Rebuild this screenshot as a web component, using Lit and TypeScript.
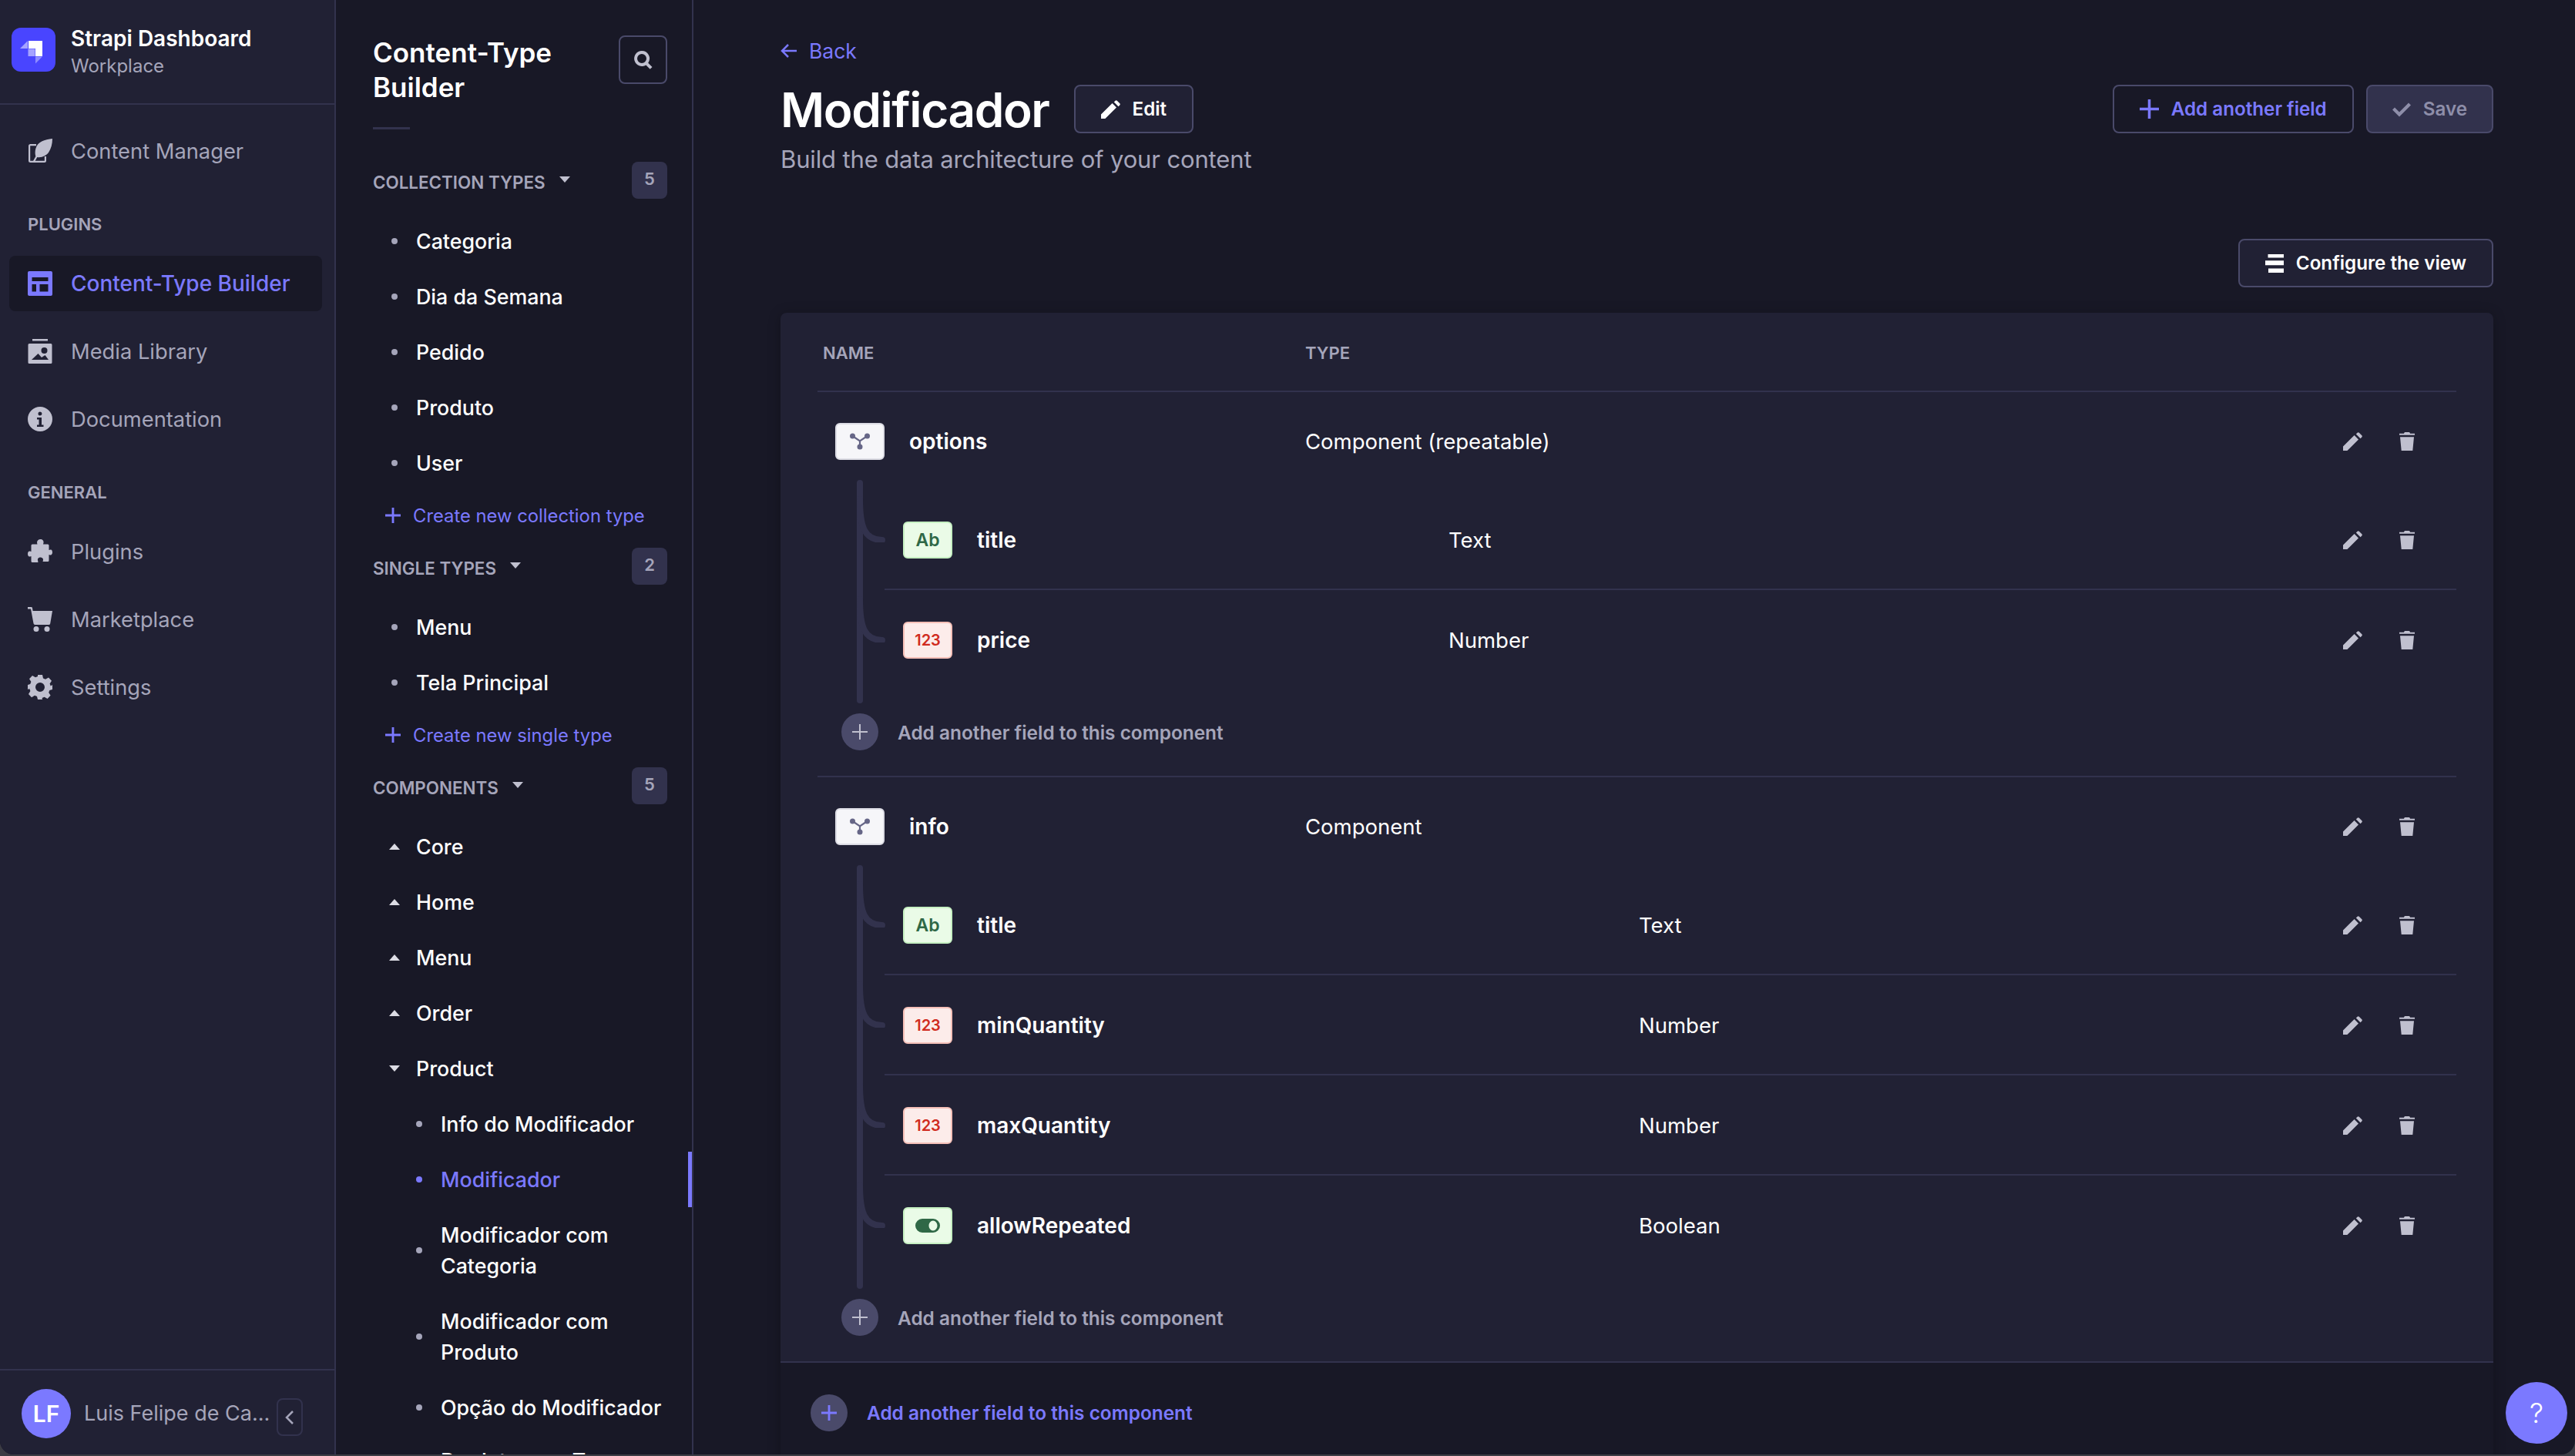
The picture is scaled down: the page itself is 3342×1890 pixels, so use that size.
import { LitElement, html, css, svg } from "lit";
import { customElement } from "lit/decorators.js";

const pencil = html`<svg class="i-pencil" viewBox="0 0 25 24"><path d="M0 24v-5.4L14.6 4l5.4 5.4L5.4 24zM16.8 2.6l1.8-1.9a1.6 1.6 0 0 1 2.2 0l3.5 3.5a1.6 1.6 0 0 1 0 2.200l-1.800 1.800z"/></svg>`;
const trash = html`<svg class="i-trash" viewBox="0 0 20 24"><path d="M6 1.700C6 .6 7 0 8 0h4c1 0 2 .6 2 1.700zM0 1.700h20v2H0zM1 6.300h18L17.300 24H2.700z"/></svg>`;
const plus = html`<svg class="i-plus" viewBox="0 0 24 24"><path d="M10.300 0h3.400v10.300H24v3.400H13.700V24h-3.400V13.700H0v-3.400h10.300z"/></svg>`;
const thinPlus = html`<svg class="i-plus" viewBox="0 0 24 24"><path d="M10.800 0h2.400v10.800H24v2.400H13.200V24h-2.400V13.200H0v-2.400h10.800z"/></svg>`;

type Field = { name: string; type: string; kind: "text" | "num" | "bool" };
type Group = { name: string; type: string; nameCol: number; fields: Field[] };

const groups: Group[] = [
  {
    name: "options",
    type: "Component (repeatable)",
    nameCol: 732,
    fields: [
      { name: "title", type: "Text", kind: "text" },
      { name: "price", type: "Number", kind: "num" },
    ],
  },
  {
    name: "info",
    type: "Component",
    nameCol: 979,
    fields: [
      { name: "title", type: "Text", kind: "text" },
      { name: "minQuantity", type: "Number", kind: "num" },
      { name: "maxQuantity", type: "Number", kind: "num" },
      { name: "allowRepeated", type: "Boolean", kind: "bool" },
    ],
  },
];

const navIcons: Record<string, unknown> = {
  write: svg`<path d="M11 7H3.500A2.500 2.500 0 0 0 1 9.500v19A2.500 2.500 0 0 0 3.500 31h18a2.500 2.500 0 0 0 2.500-2.500V23h-2.200v5.800H3.200V9.200H11z"/><path d="M32 0C22 1 12.500 4 10.300 13c-1 4-.8 7 0 10L7 29l2 1 3.300-6c6 1 12-2 15-6.500C30.200 13 32 7 32 0z"/>`,
  layout: svg`<path fill-rule="evenodd" d="M2 0h28a2 2 0 0 1 2 2v28a2 2 0 0 1-2 2H2a2 2 0 0 1-2-2V2a2 2 0 0 1 2-2zm3.500 8v5h21V8zm0 9v9.500h5.500V17zm10 0v9.500h11V17z"/>`,
  media: svg`<path fill-rule="evenodd" d="M6 0h20v2.400H6zM2 6h28a1.500 1.500 0 0 1 1.500 1.500v23A1.500 1.500 0 0 1 30 32H2A1.500 1.500 0 0 1 .500 30.500v-23A1.500 1.500 0 0 1 2 6zm19.500 5a4 4 0 1 0 0 8 4 4 0 0 0 0-8zM5 27h22l-4.500-6-4.500 3-4.500-5z"/>`,
  info: svg`<path fill-rule="evenodd" d="M16 0a16 16 0 1 1 0 32 16 16 0 0 1 0-32zm0 6.500a2.500 2.500 0 1 0 0 5 2.500 2.500 0 0 0 0-5zM12 14v2.500h2.500v7H12V26h8.500v-2.500H18V14z"/>`,
  puzzle: svg`<path d="M12 4.500C12 1.500 14 0 16.500 0S21 1.800 20.500 4.500L20 6.500h6a1.500 1.500 0 0 1 1.500 1.500v6l2-.5c2-.3 2.500 2 2.500 3.500s-1 4-3 3.500l-1.500-.5v7.500a1.500 1.500 0 0 1-1.500 1.500h-6.500l.5-2c.4-2-1.500-3.500-3.500-3.500S12.500 25 13 27l.5 3H6a1.500 1.500 0 0 1-1.500-1.500V22l-1.500.5C1 23 0 21 0 19s1-4 3-3.500l1.500.5V8A1.500 1.500 0 0 1 6 6.500h6.500z"/>`,
  cart: svg`<path d="M0 0h4.500a1.500 1.500 0 0 1 1.500 1.200L6.600 5H32l-2.800 16.500a2 2 0 0 1-2 1.500H9.500a2 2 0 0 1-2-1.700L4 2.500H0z"/><circle cx="11" cy="28.500" r="3.500"/><circle cx="25" cy="28.500" r="3.500"/>`,
  gear: svg`<path fill-rule="evenodd" d="M13 0h6l1 4.500 3 1.300 4-2.400 4 4.300-2.400 3.800 1.200 3L32 13v6l-3.600 1-1.200 3 2.400 3.800-4 4.300-4-2.400-3 1.300L19 32h-6l-1-3.900-3-1.300-4 2.400-4-4.300 2.400-3.800-1.200-3L0 19v-6l3.200-1 1.200-3L2 5.200l4-4.300 4 2.400 3-1.300zM16 10a6 6 0 1 0 0 12 6 6 0 0 0 0-12z"/>`,
};

type NavItem = { label: string; icon: string; active?: boolean };
const plugins: NavItem[] = [
  { label: "Content-Type Builder", icon: "layout", active: true },
  { label: "Media Library", icon: "media" },
  { label: "Documentation", icon: "info" },
];
const general: NavItem[] = [
  { label: "Plugins", icon: "puzzle" },
  { label: "Marketplace", icon: "cart" },
  { label: "Settings", icon: "gear" },
];

@customElement("app-root")
export class AppRoot extends LitElement {
  static styles = css`
    :host {
      display: block;
      width: 3342px;
      height: 1890px;
      background: #3c3c44;
      font-family: Inter, "Liberation Sans", sans-serif;
      color: #fff;
      overflow: hidden;
    }
    * { box-sizing: border-box; }
    svg { display: block; flex: none; fill: currentColor; }
    .window {
      position: relative;
      display: flex;
      height: 1888px;
      background: #181826;
      border-radius: 0 0 18px 18px;
      overflow: hidden;
    }

    /* left nav */
    .nav {
      width: 436px;
      flex: none;
      display: flex;
      flex-direction: column;
      background: #212134;
      border-right: 2px solid #32324d;
    }
    .brand {
      height: 136px;
      flex: none;
      display: flex;
      align-items: center;
      gap: 20px;
      padding: 0 0 6px 15px;
      border-bottom: 2px solid #32324d;
    }
    .brand svg { width: 57px; height: 57px; }
    .brand-text { padding-top: 6px; }
    .brand-name { font-size: 28px; font-weight: 600; line-height: 38px; }
    .brand-sub { font-size: 24px; line-height: 34px; color: #a5a5ba; }
    .nav-body { flex: 1; padding: 24px 16px 0 12px; }
    .nav-item {
      height: 72px;
      margin-bottom: 16px;
      display: flex;
      align-items: center;
      gap: 24px;
      padding: 0 0 0 24px;
      border-radius: 8px;
      font-size: 27.300px;
      color: #a5a5ba;
    }
    .nav-item svg { width: 32px; height: 32px; color: #c0c0cf; }
    .nav-item.active { background: #181826; color: #7b79ff; font-weight: 500; font-size: 28px; }
    .nav-item.active svg { color: #7b79ff; }
    .nav-label {
      height: 30px;
      display: flex;
      align-items: center;
      padding-left: 24px;
      font-size: 22px;
      font-weight: 600;
      color: #a5a5ba;
      margin: 44px 0 26px;
    }
    .nav-foot {
      height: 111px;
      flex: none;
      display: flex;
      align-items: center;
      padding: 2px 0 0 28px;
      border-top: 2px solid #32324d;
    }
    .avatar {
      width: 64px;
      height: 64px;
      flex: none;
      border-radius: 50%;
      background: #7b79ff;
      display: flex;
      align-items: center;
      justify-content: center;
      font-size: 30px;
      font-weight: 600;
    }
    .user { margin-left: 17px; width: 250px; font-size: 27px; color: #a5a5ba; white-space: nowrap; }
    .collapse {
      width: 34px;
      height: 49px;
      flex: none;
      margin-top: 10px;
      display: flex;
      align-items: center;
      justify-content: center;
      border: 2px solid #32324d;
      border-radius: 8px;
      color: #a5a5ba;
    }
    .collapse svg { width: 12px; height: 20px; fill: none; stroke: currentColor; stroke-width: 2.500; }

    /* sub nav */
    .sub {
      position: relative;
      width: 464px;
      flex: none;
      border-right: 2px solid #32324d;
      overflow: hidden;
      padding: 46px 32px 0 48px;
    }
    .sub-head { display: flex; justify-content: space-between; align-items: flex-start; }
    .sub-title { font-size: 35px; font-weight: 600; line-height: 45px; width: 260px; }
    .search {
      width: 63px;
      height: 63px;
      display: flex;
      align-items: center;
      justify-content: center;
      border: 2px solid #4a4a6a;
      border-radius: 8px;
      color: #c0c0cf;
    }
    .search svg { width: 24px; height: 24px; }
    .rule { width: 48px; height: 3px; background: #32324d; margin-top: 29px; }
    .gap { height: 42px; }
    .sec {
      height: 48px;
      display: flex;
      align-items: center;
      margin-bottom: 19px;
      font-size: 22.400px;
      font-weight: 600;
      color: #a5a5ba;
    }
    .sec-label { padding-top: 4px; }
    .sec-caret {
      width: 14px;
      height: 8px;
      flex: none;
      margin: 0 0 2px 18px;
      fill: #c0c0cf;
    }
    .badge {
      margin-left: auto;
      width: 46px;
      height: 48px;
      display: flex;
      align-items: center;
      justify-content: center;
      padding-bottom: 4px;
      background: #32324d;
      border-radius: 8px;
      font-size: 22px;
      font-weight: 600;
    }
    .li {
      display: flex;
      align-items: center;
      min-height: 72px;
      padding: 16px 0 16px 24px;
      font-size: 26.800px;
      font-weight: 500;
      line-height: 40px;
    }
    .li.nested { padding-left: 56px; }
    .li.peek { margin-top: -3px; }
    .dot { width: 8px; height: 8px; flex: none; border-radius: 50%; background: #a5a5ba; margin-right: 24px; }
    .li.cur { color: #7b79ff; }
    .li.cur .dot { background: #7b79ff; }
    .tri { width: 14px; height: 8px; flex: none; margin: 0 21px 0 -3px; fill: #dcdce4; }
    .tri.up { transform: rotate(180deg); }
    .marker { position: absolute; right: 0; top: 1495px; width: 5px; height: 72px; background: #7b79ff; }
    .create {
      height: 64px;
      margin-bottom: 10px;
      display: flex;
      align-items: center;
      padding-left: 16px;
      gap: 16px;
      font-size: 23.800px;
      color: #7b79ff;
    }
    .create .i-plus { width: 20px; height: 20px; }

    /* main */
    .main { flex: 1; min-width: 0; padding: 46px 106px 0 113px; }
    .back { height: 40px; display: flex; align-items: center; gap: 16px; font-size: 26.500px; color: #7b79ff; }
    .back svg { width: 21px; height: 20px; fill: none; stroke: currentColor; stroke-width: 2.500; }
    .top { display: flex; align-items: center; margin-top: 24px; height: 63px; }
    h1 { margin: 0 32px 0 0; padding-top: 2px; font-size: 62px; letter-spacing: -1.400px; font-weight: 600; line-height: 64px; }
    .btn {
      height: 63px;
      display: flex;
      align-items: center;
      gap: 16px;
      padding: 0 33px;
      border: 2px solid #4a4a6a;
      border-radius: 8px;
      font-size: 24.200px;
      font-weight: 600;
      white-space: nowrap;
    }
    .btn .i-pencil { width: 25px; height: 24px; }
    .btn .i-plus { width: 25px; height: 25px; }
    .btn.panel { background: #212134; }
    .btn.primary { color: #7b79ff; margin-left: auto; }
    .btn.off { margin-left: 16px; padding: 0 32px; background: #32324d; color: #8e8ea9; }
    .btn.off svg { width: 24px; height: 20px; }
    .subtitle { margin-top: 14px; font-size: 31px; letter-spacing: -0.140px; line-height: 40px; color: #a5a5ba; }
    .cfg-row { display: flex; justify-content: flex-end; margin-top: 83px; }
    .cfg-row svg { width: 24px; height: 24px; }

    .card { margin-top: 33px; background: #212134; border-radius: 8px 8px 0 0; box-shadow: 0 2px 16px rgba(3, 3, 5, 0.25); }
    .card-body { padding: 0 48px; }
    .thead {
      height: 103px;
      display: flex;
      align-items: center;
      padding: 2px 0 0 7px;
      border-bottom: 2px solid #32324d;
      font-size: 22px;
      font-weight: 600;
      color: #a5a5ba;
    }
    .thead span:first-child { width: 626px; }
    .group { border-bottom: 2px solid #32324d; }
    .group:last-child { border-bottom: 0; }
    .row { height: 127px; display: flex; align-items: center; padding-left: 23px; }
    .row .name { width: 610px; display: flex; align-items: center; gap: 32px; }
    .nm { font-size: 28px; font-weight: 600; }
    .tp { font-size: 27.500px; }
    .acts { margin-left: auto; display: flex; align-items: center; gap: 48px; padding-right: 54px; color: #c0c0cf; }
    .i-pencil { width: 25px; height: 24px; }
    .i-trash { width: 20px; height: 24px; }
    .box {
      width: 64px;
      height: 48px;
      flex: none;
      display: flex;
      align-items: center;
      justify-content: center;
      border: 2px solid;
      border-radius: 6px;
      font-weight: 600;
    }
    .box.comp { background: #f6f6f9; border-color: #dcdce4; color: #666687; }
    .box.comp svg { width: 26px; height: 22px; }
    .box.text { background: #eafbe7; border-color: #c6f0c2; color: #2f6846; font-size: 23px; }
    .box.num { background: #fcecea; border-color: #f5c0b8; color: #d02b20; font-size: 20px; }
    .box.bool { background: #eafbe7; border-color: #c6f0c2; color: #2f6846; }
    .box.bool svg { width: 32px; height: 18px; }
    .fields { position: relative; }
    .spine { position: absolute; left: 51px; top: -13px; bottom: -17px; width: 8px; border-radius: 4px; background: #32324d; }
    .sub-row { position: relative; height: 130px; margin-left: 87px; padding: 2px 0 0 24px; display: flex; align-items: center; border-bottom: 2px solid #32324d; }
    .sub-row:last-child { border-bottom: 0; padding-top: 0; }
    .sub-row .name { display: flex; align-items: center; gap: 32px; flex: none; }
    .curve { position: absolute; left: -36px; top: 8px; width: 40px; height: 60px; fill: none; stroke: #32324d; stroke-width: 8; stroke-linecap: round; }
    .add { display: flex; align-items: center; gap: 25px; padding: 30px 0 33px 31px; font-size: 24.400px; font-weight: 600; color: #a5a5ba; }
    .add-label { padding-top: 2px; }
    .circle {
      width: 48px;
      height: 48px;
      flex: none;
      display: flex;
      align-items: center;
      justify-content: center;
      border-radius: 50%;
      background: #4a4a6a;
      color: #c0c0cf;
    }
    .circle .i-plus { width: 20px; height: 20px; }
    .foot {
      display: flex;
      align-items: center;
      gap: 25px;
      height: 131px;
      padding: 0 0 0 39px;
      background: #181826;
      border-top: 2px solid #32324d;
      font-size: 24.400px;
      font-weight: 600;
      color: #7b79ff;
    }
    .foot .circle { color: #7b79ff; }
    .help {
      position: absolute;
      right: 10px;
      bottom: 14px;
      width: 80px;
      height: 80px;
      display: flex;
      align-items: center;
      justify-content: center;
      border-radius: 50%;
      background: #7b79ff;
      font-size: 36px;
      font-weight: 300;
    }
  `;

  private navItem(i: NavItem) {
    return html`<div class="nav-item ${i.active ? "active" : ""}">
      <svg viewBox="0 0 32 32">${navIcons[i.icon]}</svg><span>${i.label}</span>
    </div>`;
  }

  private section(label: string, count: number) {
    return html`<div class="sec">
      <span class="sec-label">${label}</span>
      <svg class="sec-caret" viewBox="0 0 14 8"><path d="M0 0h14L7 8z"/></svg>
      <span class="badge">${count}</span>
    </div>`;
  }

  private bullet(label: unknown, cls = "") {
    return html`<div class="li ${cls}"><span class="dot"></span><span>${label}</span></div>`;
  }

  private folder(label: string, open = false) {
    return html`<div class="li">
      <svg class="tri ${open ? "" : "up"}" viewBox="0 0 14 8"><path d="M0 0h14L7 8z"/></svg><span>${label}</span>
    </div>`;
  }

  private typeBox(kind: string) {
    if (kind === "text") return html`<span class="box text">Ab</span>`;
    if (kind === "num") return html`<span class="box num">123</span>`;
    return html`<span class="box bool"><svg viewBox="0 0 32 18"><path fill-rule="evenodd" d="M9 0h14a9 9 0 0 1 0 18H9A9 9 0 0 1 9 0zm14 2.500c-3 0-5.500 3-5.500 6.500s2.500 6.500 5.500 6.500 5.500-3 5.500-6.500-2.500-6.500-5.500-6.500z"/></svg></span>`;
  }

  private actions() {
    return html`<div class="acts">${pencil}${trash}</div>`;
  }

  private group(g: Group) {
    return html`<div class="group">
      <div class="row">
        <div class="name">
          <span class="box comp"><svg viewBox="0 0 26 22"><path d="M3.500 4L13 10.500 22.500 4M13 10v8" fill="none" stroke="currentColor" stroke-width="2.200"/><circle cx="3.500" cy="4" r="3.500"/><circle cx="22.500" cy="4" r="3.500"/><circle cx="13" cy="18" r="3.500"/></svg></span>
          <span class="nm">${g.name}</span>
        </div>
        <span class="tp">${g.type}</span>
        ${this.actions()}
      </div>
      <div class="fields">
        <div class="spine"></div>
        ${g.fields.map(
          (f) => html`<div class="sub-row">
            <svg class="curve" viewBox="0 0 40 60"><path d="M4 4C4 40 10 57 33 57"/></svg>
            <div class="name" style="width:${g.nameCol - 24}px">
              ${this.typeBox(f.kind)}<span class="nm">${f.name}</span>
            </div>
            <span class="tp">${f.type}</span>
            ${this.actions()}
          </div>`
        )}
      </div>
      <div class="add"><span class="circle">${thinPlus}</span><span class="add-label">Add another field to this component</span></div>
    </div>`;
  }

  render() {
    return html`<div class="window">
      <aside class="nav">
        <div class="brand">
          <svg viewBox="0 0 57 57">
            <rect width="57" height="57" rx="12" fill="#4945ff"/>
            <path d="M22 17h18v20h-9V27h-9z" fill="#fff"/>
            <path d="M11 27l10-10v10z" fill="#a5a3ff"/>
            <path d="M21.500 27.500h9v9.500h-9z" fill="#a5a3ff"/>
            <path d="M31 37.500h9l-9 9z" fill="#8e8cff"/>
          </svg>
          <div class="brand-text"><div class="brand-name">Strapi Dashboard</div><div class="brand-sub">Workplace</div></div>
        </div>
        <div class="nav-body">
          <div class="nav-group">${this.navItem({ label: "Content Manager", icon: "write" })}</div>
          <div class="nav-label">PLUGINS</div>
          <div class="nav-group">${plugins.map((i) => this.navItem(i))}</div>
          <div class="nav-label">GENERAL</div>
          <div class="nav-group">${general.map((i) => this.navItem(i))}</div>
        </div>
        <div class="nav-foot">
          <span class="avatar">LF</span>
          <span class="user">Luis Felipe de Ca...</span>
          <span class="collapse"><svg viewBox="0 0 12 20"><path d="M10 2L2 10l8 8"/></svg></span>
        </div>
      </aside>

      <section class="sub">
        <div class="sub-head">
          <div class="sub-title">Content-Type Builder</div>
          <div class="search"><svg viewBox="0 0 24 24"><path fill-rule="evenodd" d="M10 0a10 10 0 0 1 8.200 15.700l5.300 5.300-2.800 2.800-5.300-5.300A10 10 0 1 1 10 0zm0 4a6 6 0 1 0 0 12 6 6 0 0 0 0-12z"/></svg></div>
        </div>
        <div class="rule"></div>
        <div class="gap"></div>
        ${this.section("COLLECTION TYPES", 5)}
        ${["Categoria", "Dia da Semana", "Pedido", "Produto", "User"].map((l) => this.bullet(l))}
        <div class="create">${plus}<span>Create new collection type</span></div>
        ${this.section("SINGLE TYPES", 2)}
        ${["Menu", "Tela Principal"].map((l) => this.bullet(l))}
        <div class="create">${plus}<span>Create new single type</span></div>
        ${this.section("COMPONENTS", 5)}
        ${["Core", "Home", "Menu", "Order"].map((l) => this.folder(l))}
        ${this.folder("Product", true)}
        ${this.bullet("Info do Modificador", "nested")}
        ${this.bullet("Modificador", "nested cur")}
        ${this.bullet("Modificador com Categoria", "nested")}
        ${this.bullet("Modificador com Produto", "nested")}
        ${this.bullet("Opção do Modificador", "nested")}
        ${this.bullet("Produto com Tag", "nested peek")}
        <div class="marker"></div>
      </section>

      <main class="main">
        <div class="back"><svg viewBox="0 0 21 20"><path d="M10 2L2 10l8 8M2 10h19"/></svg><span>Back</span></div>
        <div class="top">
          <h1>Modificador</h1>
          <div class="btn panel">${pencil}<span>Edit</span></div>
          <div class="btn primary">${plus}<span>Add another field</span></div>
          <div class="btn off"><svg viewBox="0 0 24 20"><path d="M0 10.500L3 7.500l6 6L21 1.500 24 4.500 9 19.500z"/></svg><span>Save</span></div>
        </div>
        <div class="subtitle">Build the data architecture of your content</div>
        <div class="cfg-row">
          <div class="btn panel"><svg viewBox="0 0 24 24"><path d="M3.500 0H24v4.600H3.500zM0 8.300h24v6H0zM4 18.600h20V24H4z"/></svg><span>Configure the view</span></div>
        </div>
        <div class="card">
          <div class="card-body">
            <div class="thead"><span>NAME</span><span>TYPE</span></div>
            ${groups.map((g) => this.group(g))}
          </div>
          <div class="foot"><span class="circle">${plus}</span><span>Add another field to this component</span></div>
        </div>
      </main>
      <div class="help">?</div>
    </div>`;
  }
}
